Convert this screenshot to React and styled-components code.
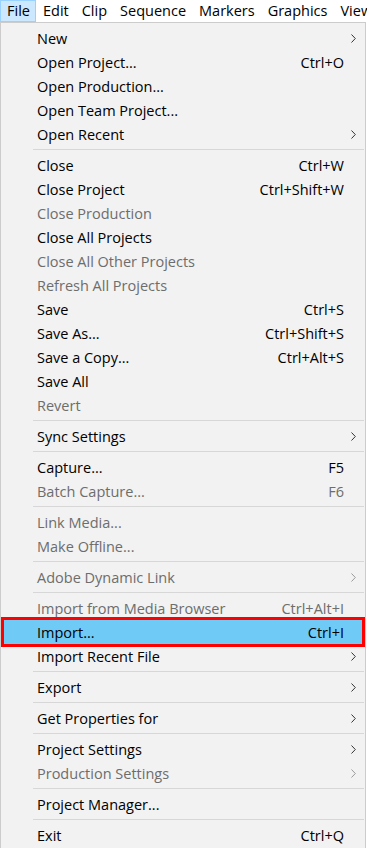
import React from "react";
import styled, { createGlobalStyle } from "styled-components";

const Global = createGlobalStyle`
  html, body { margin: 0; padding: 0; background: #ffffff; overflow: hidden; }
  body { font-family: "Open Sans", "Noto Sans", sans-serif; }
  * { box-sizing: border-box; }
`;

const Page = styled.div`
  width: 367px;
  height: 848px;
  display: flex;
  flex-direction: column;
  background: #ffffff;
`;

const MenuBar = styled.div`
  display: flex;
  height: 22px;
  align-items: stretch;
  background: #ffffff;
  font-size: 14.5px;
  color: #000;
  white-space: nowrap;
  overflow: hidden;
`;

const BarItem = styled.div`
  display: flex;
  align-items: center;
  padding: 0 5px 1px 6px;
  border: 1px solid ${(p) => (p.$active ? "#99d1ff" : "transparent")};
  background: ${(p) => (p.$active ? "#cce8ff" : "transparent")};
`;

const Panel = styled.div`
  flex: 1;
  width: 366px;
  background: #f2f2f2;
  border: 1px solid #cccccc;
  border-bottom: none;
  padding: 3px 3px 0 3px;
  display: flex;
  flex-direction: column;
  font-size: 14.5px;
`;

const Row = styled.div`
  display: flex;
  align-items: center;
  height: 24px;
  padding-left: 33px;
  color: ${(p) => (p.$disabled ? "#6d6d6d" : "#000000")};
  background: ${(p) => (p.$selected ? "#6fcaf6" : "transparent")};
  outline: ${(p) => (p.$selected ? "3px solid #ff0000" : "none")};
  white-space: nowrap;
`;

const Label = styled.span`
  flex: 1;
`;

const Shortcut = styled.span`
  text-align: right;
`;

const Trail = styled.span`
  width: 18px;
  display: flex;
  justify-content: center;
  align-items: center;
  padding-left: 1px;
`;

const Separator = styled.div`
  height: 7px;
  display: flex;
  align-items: center;
  padding-left: 29px;
  margin-right: -2px;
  &::after {
    content: "";
    flex: 1;
    height: 1px;
    background: #d7d7d7;
  }
`;

const Chevron = ({ color }) => (
  <svg width="5" height="9" viewBox="0 0 5 9">
    <path d="M0.5 0.5 L4.3 4.5 L0.5 8.5" fill="none" stroke={color} strokeWidth="1" />
  </svg>
);

const items = [
  { t: "New", sub: true },
  { t: "Open Project...", k: "Ctrl+O" },
  { t: "Open Production..." },
  { t: "Open Team Project..." },
  { t: "Open Recent", sub: true },
  "sep",
  { t: "Close", k: "Ctrl+W" },
  { t: "Close Project", k: "Ctrl+Shift+W" },
  { t: "Close Production", d: true },
  { t: "Close All Projects" },
  { t: "Close All Other Projects", d: true },
  { t: "Refresh All Projects", d: true },
  { t: "Save", k: "Ctrl+S" },
  { t: "Save As...", k: "Ctrl+Shift+S" },
  { t: "Save a Copy...", k: "Ctrl+Alt+S" },
  { t: "Save All" },
  { t: "Revert", d: true },
  "sep",
  { t: "Sync Settings", sub: true },
  "sep",
  { t: "Capture...", k: "F5" },
  { t: "Batch Capture...", k: "F6", d: true },
  "sep",
  { t: "Link Media...", d: true },
  { t: "Make Offline...", d: true },
  "sep",
  { t: "Adobe Dynamic Link", sub: true, d: true },
  "sep",
  { t: "Import from Media Browser", k: "Ctrl+Alt+I", d: true },
  { t: "Import...", k: "Ctrl+I", sel: true },
  { t: "Import Recent File", sub: true },
  "sep",
  { t: "Export", sub: true },
  "sep",
  { t: "Get Properties for", sub: true },
  "sep",
  { t: "Project Settings", sub: true },
  { t: "Production Settings", sub: true, d: true },
  "sep",
  { t: "Project Manager..." },
  "sep",
  { t: "Exit", k: "Ctrl+Q" },
];

const bar = ["File", "Edit", "Clip", "Sequence", "Markers", "Graphics", "View"];

export default function App() {
  return (
    <Page>
      <Global />
      <MenuBar>
        {bar.map((b, i) => (
          <BarItem key={b} $active={i === 0}>{b}</BarItem>
        ))}
      </MenuBar>
      <Panel>
        {items.map((it, i) =>
          it === "sep" ? (
            <Separator key={i} />
          ) : (
            <Row key={i} $disabled={it.d} $selected={it.sel}>
              <Label>{it.t}</Label>
              {it.k && <Shortcut>{it.k}</Shortcut>}
              <Trail>{it.sub && <Chevron color={it.d ? "#9a9a9a" : "#333333"} />}</Trail>
            </Row>
          )
        )}
      </Panel>
    </Page>
  );
}
